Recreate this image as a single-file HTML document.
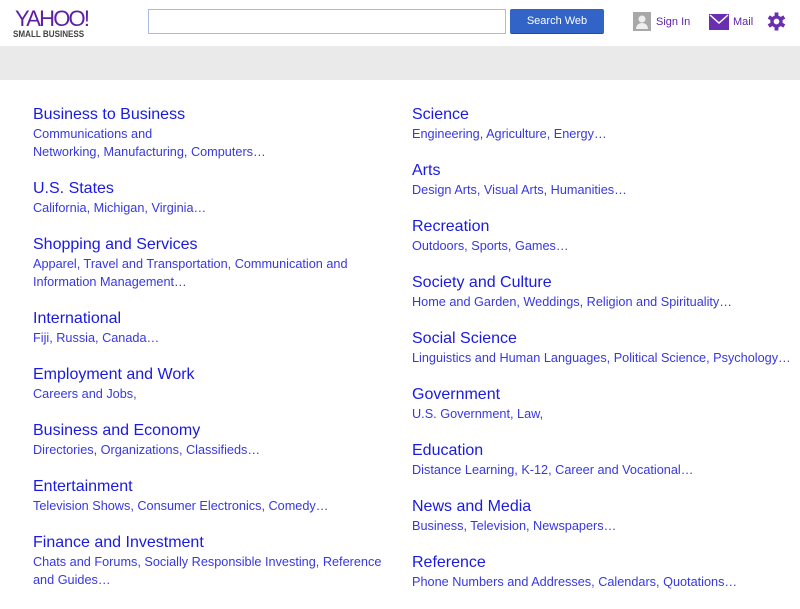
<!DOCTYPE html>
<html><head><meta charset="utf-8"><style>
body{margin:0;width:800px;height:598px;overflow:hidden;background:#fff;font-family:"Liberation Sans",Arial,sans-serif;position:relative}
.logo{position:absolute;left:13px;top:8px;color:#5c1fa7}
.logo .y{font-size:22px;letter-spacing:-1.8px;line-height:21px;margin-left:2px}
.logo .s{font-size:9.5px;color:#444;line-height:11px;transform:scaleX(0.85);transform-origin:left;font-weight:bold}
.search{position:absolute;left:148px;top:9px;width:356px;height:23px;border:1px solid #a9b9e6}
.btn{position:absolute;left:510px;top:9px;width:94px;height:25px;background:#3264c8;border-radius:2px;color:#fff;font-size:11px;text-align:center;line-height:24px;border-bottom:1px solid #254a96;box-sizing:border-box}
.hdr{position:absolute;font-size:11px;color:#5c1fa7;top:16px}
.band{position:absolute;left:0;top:46px;width:800px;height:34px;background:#eaeaea}
.col{position:absolute;top:105px;width:370px}
.b{margin-bottom:18px}
.t{font-size:16px;line-height:20px;color:#1a1ae0}
.d{font-size:12.7px;line-height:18px;color:#3838e0}
</style></head><body>
<div class="logo"><div class="y">YAHOO!</div><div class="s">SMALL BUSINESS</div></div>
<div class="search"></div>
<div class="btn">Search Web</div>
<svg style="position:absolute;left:633px;top:12px" width="18" height="19" viewBox="0 0 18 19"><rect width="18" height="19" fill="#a8a8a8"/><circle cx="9" cy="7" r="3.5" fill="#eee"/><path d="M3 17c0-4 3-6 6-6s6 2 6 6z" fill="#eee"/></svg>
<div class="hdr" style="left:656px">Sign In</div>
<svg style="position:absolute;left:709px;top:14px" width="20" height="16" viewBox="0 0 20 16"><rect width="20" height="16" fill="#6a2fb0"/><path d="M1 1l9 8 9-8" stroke="#fff" stroke-width="1.5" fill="none"/></svg>
<div class="hdr" style="left:733px">Mail</div>
<svg style="position:absolute;left:767px;top:12px" width="19" height="19" viewBox="0 0 20 20"><g fill="#6a2fb0"><circle cx="10" cy="10" r="6.5"/><rect x="8" y="0.5" width="4" height="19"/><rect x="8" y="0.5" width="4" height="19" transform="rotate(60 10 10)"/><rect x="8" y="0.5" width="4" height="19" transform="rotate(120 10 10)"/></g><circle cx="10" cy="10" r="3" fill="#fff"/></svg>
<div class="band"></div>
<div class="col" style="left:33px">
<div class="b"><div class="t">Business to Business</div><div class="d">Communications and<br>Networking, Manufacturing, Computers…</div></div>
<div class="b"><div class="t">U.S. States</div><div class="d">California, Michigan, Virginia…</div></div>
<div class="b"><div class="t">Shopping and Services</div><div class="d">Apparel, Travel and Transportation, Communication and<br>Information Management…</div></div>
<div class="b"><div class="t">International</div><div class="d">Fiji, Russia, Canada…</div></div>
<div class="b"><div class="t">Employment and Work</div><div class="d">Careers and Jobs,</div></div>
<div class="b"><div class="t">Business and Economy</div><div class="d">Directories, Organizations, Classifieds…</div></div>
<div class="b"><div class="t">Entertainment</div><div class="d">Television Shows, Consumer Electronics, Comedy…</div></div>
<div class="b"><div class="t">Finance and Investment</div><div class="d" style="white-space:nowrap">Chats and Forums, Socially Responsible Investing, Reference<br>and Guides…</div></div>
</div>
<div class="col" style="left:412px;width:388px">
<div class="b"><div class="t">Science</div><div class="d">Engineering, Agriculture, Energy…</div></div>
<div class="b"><div class="t">Arts</div><div class="d">Design Arts, Visual Arts, Humanities…</div></div>
<div class="b"><div class="t">Recreation</div><div class="d">Outdoors, Sports, Games…</div></div>
<div class="b"><div class="t">Society and Culture</div><div class="d">Home and Garden, Weddings, Religion and Spirituality…</div></div>
<div class="b"><div class="t">Social Science</div><div class="d" style="white-space:nowrap">Linguistics and Human Languages, Political Science, Psychology…</div></div>
<div class="b"><div class="t">Government</div><div class="d">U.S. Government, Law,</div></div>
<div class="b"><div class="t">Education</div><div class="d">Distance Learning, K-12, Career and Vocational…</div></div>
<div class="b"><div class="t">News and Media</div><div class="d">Business, Television, Newspapers…</div></div>
<div class="b"><div class="t">Reference</div><div class="d">Phone Numbers and Addresses, Calendars, Quotations…</div></div>
</div>
</body></html>
